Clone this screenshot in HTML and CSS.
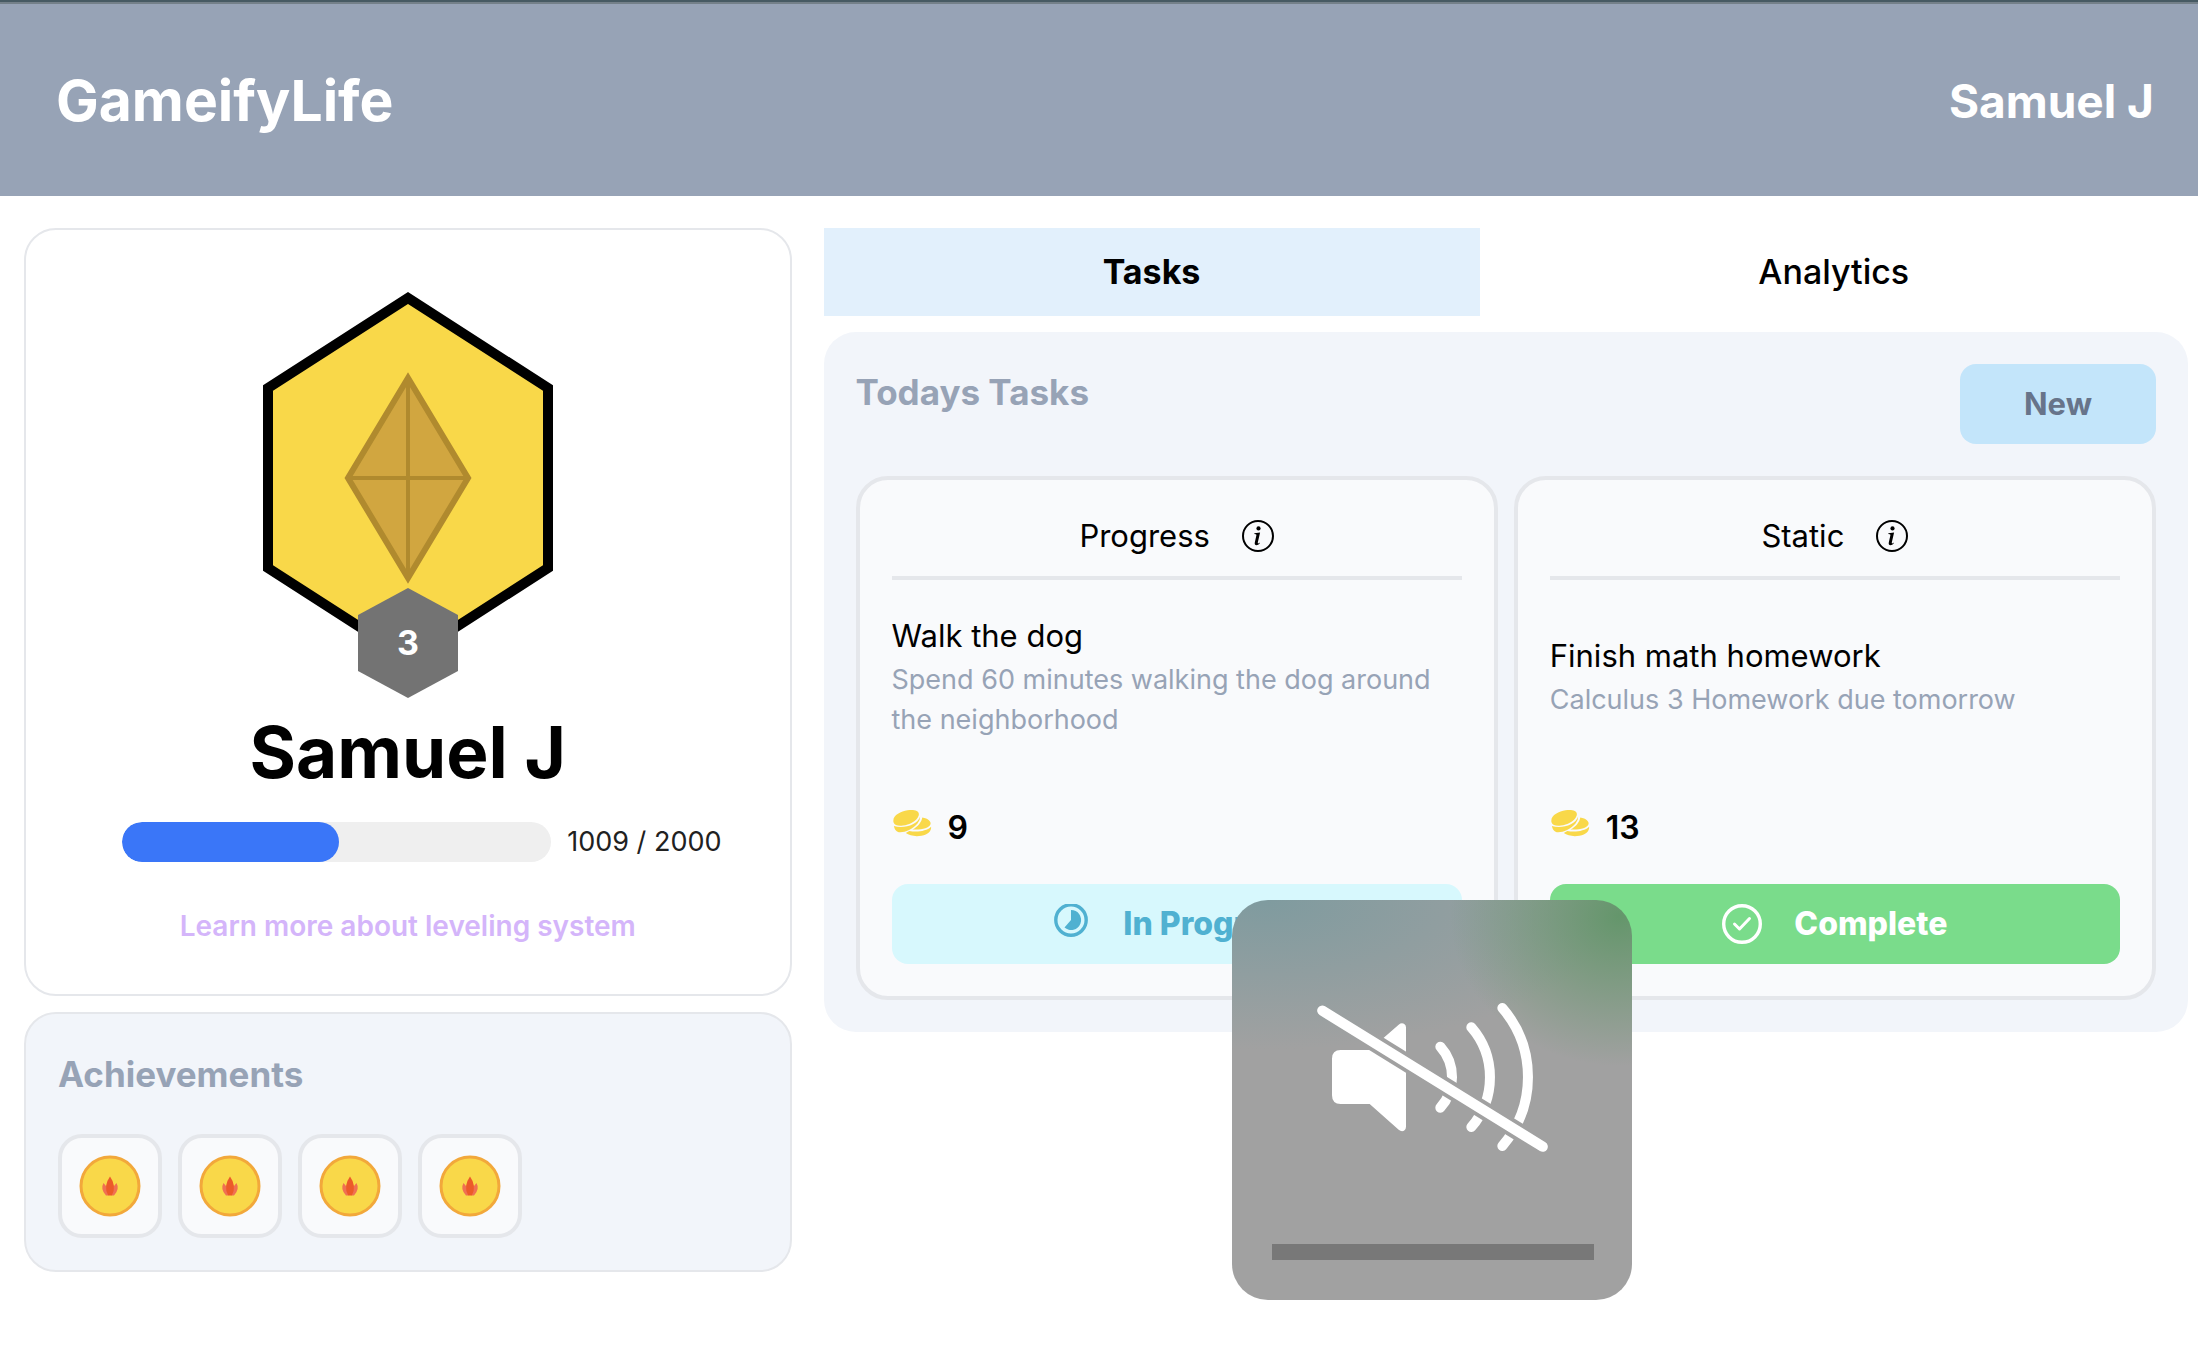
FILE: index.html
```html
<!DOCTYPE html>
<html lang="en">
<head>
<meta charset="utf-8">
<meta name="viewport" content="width=device-width, initial-scale=1">
<title>GameifyLife</title>
<link rel="stylesheet" href="styles.css">
</head>
<body>
<svg class="sprite" aria-hidden="true">
  <symbol id="info" viewBox="0 0 32 32">
    <circle cx="16" cy="16" r="15" fill="none" stroke="currentColor" stroke-width="2"/>
    <circle cx="16.5" cy="8.4" r="2.1" fill="currentColor"/>
    <path d="M12.4 13.2L18.1 12.5L15.800 22.600Q15.700 23.700 16.400 23.500Q17 23.300 17.700 22.600L17.500 23.800Q16.200 25.200 14.500 25.200Q12.300 25 12.800 22.400L14.400 15.200Q14.500 14.300 13.700 14.200L12.300 14.100Z" fill="currentColor"/>
  </symbol>
  <symbol id="coins" viewBox="0 0 40 40">
    <g fill="#f9d849">
      <path d="M1.6 18.5C-.4 12 8.500 7.200 15.500 6.300C22 5.300 28.500 6.500 26.500 12C24.500 17.500 17 20.800 11 21.600C6.500 22.200 2.500 21.500 1.600 18.500Z"/>
      <path d="M1.900 21.900C11 25.200 25.500 21 28.200 12.500Q28.300 16 25.500 19.500C20.500 25.500 13.500 28.300 8 28.200C4.500 28 2.800 26 1.900 21.900Z"/>
      <path d="M30.300 13.400C36 14.200 39.500 17.500 38.500 20.300C37 24 30 26 20.500 25.500C26 22.500 29.500 18 30.300 13.400Z"/>
      <path d="M17.300 27C25 28.400 34.500 27.300 39.100 22.800C39.500 27 36 30.600 29.500 31.800C23 32.700 17.500 31.800 13.800 29.100Z"/>
    </g>
  </symbol>
  <symbol id="flame-coin" viewBox="0 0 62 62">
    <circle cx="31" cy="31" r="29" fill="#f9d849" stroke="#f2a83b" stroke-width="3"/>
    <path d="M24.500 28Q29.500 33 29.500 40.500H27Q21 34 24.500 28ZM37.500 28Q32.500 33 32.500 40.500H35Q41 34 37.500 28Z" fill="#f07053"/>
    <path d="M31 21.500Q38 31 32.800 40.500H29.200Q24 31 31 21.500Z" fill="#ec5a29"/>
  </symbol>
</svg>

<header class="topbar">
  <h1 class="brand">GameifyLife</h1>
  <span class="user">Samuel J</span>
</header>

<main class="layout">
  <div class="side">
    <section class="profile">
      <svg class="badge" viewBox="0 0 292 410" role="img" aria-label="Level 3">
        <path d="M146 8L286 98V278L146 368L6 278V98Z" fill="#f9d849" stroke="#000" stroke-width="10"/>
        <path d="M146 88L206 188L146 288L86 188Z" fill="#d1a640" stroke="#b08a2e" stroke-width="6"/>
        <path d="M146 88V288M86 188H206" stroke="#b08a2e" stroke-width="4"/>
        <path d="M146 298L196 325V381L146 408L96 381V325Z" fill="#737373"/>
        <text class="badge-level" x="146" y="365" text-anchor="middle">3</text>
      </svg>
      <h2 class="profile-name">Samuel J</h2>
      <div class="xp">
        <progress class="xp-bar" id="xp" value="1009" max="2000"></progress>
        <label class="xp-label" for="xp">1009 / 2000</label>
      </div>
      <a class="learn" href="#">Learn more about leveling system</a>
    </section>

    <section class="achievements">
      <h2 class="section-title">Achievements</h2>
      <ul class="tiles">
        <li class="tile"><svg class="tile-icon"><use href="#flame-coin"/></svg></li>
        <li class="tile"><svg class="tile-icon"><use href="#flame-coin"/></svg></li>
        <li class="tile"><svg class="tile-icon"><use href="#flame-coin"/></svg></li>
        <li class="tile"><svg class="tile-icon"><use href="#flame-coin"/></svg></li>
      </ul>
    </section>
  </div>

  <div class="content">
    <nav class="tabs">
      <button class="tab tab-active" type="button">Tasks</button>
      <button class="tab" type="button">Analytics</button>
    </nav>

    <section class="panel">
      <div class="panel-head">
        <h2 class="section-title">Todays Tasks</h2>
        <button class="new" type="button">New</button>
      </div>
      <div class="cards">
        <article class="card">
          <div class="card-head"><span>Progress</span><svg class="info"><use href="#info"/></svg></div>
          <div class="card-body">
            <h3 class="task-title">Walk the dog</h3>
            <p class="task-text">Spend 60 minutes walking the dog around the neighborhood</p>
          </div>
          <div class="reward"><svg class="icon"><use href="#coins"/></svg><span>9</span></div>
          <button class="action action-progress" type="button">
            <svg class="icon" viewBox="0 0 40 40"><circle cx="20" cy="16" r="15.200" fill="none" stroke="currentColor" stroke-width="3.400"/><path d="M20 16V6A10 10 0 1 1 13.500 23.500Z" fill="currentColor"/></svg>
            <span>In Progress</span>
          </button>
        </article>
        <article class="card">
          <div class="card-head"><span>Static</span><svg class="info"><use href="#info"/></svg></div>
          <div class="card-body">
            <h3 class="task-title">Finish math homework</h3>
            <p class="task-text">Calculus 3 Homework due tomorrow</p>
          </div>
          <div class="reward"><svg class="icon"><use href="#coins"/></svg><span>13</span></div>
          <button class="action action-complete" type="button">
            <svg class="icon" viewBox="0 0 40 40" fill="none" stroke="currentColor" stroke-width="3.400" stroke-linecap="round" stroke-linejoin="round"><circle cx="20" cy="20" r="18.300"/><path d="M12.500 20L17.500 25L27.500 14.500" stroke-width="3"/></svg>
            <span>Complete</span>
          </button>
        </article>
      </div>
    </section>
  </div>
</main>

<div class="volume" role="status" aria-label="Muted">
  <svg class="volume-art" viewBox="66 60 1200 1200">
    <mask id="cut" maskUnits="userSpaceOnUse" x="66" y="60" width="1200" height="1200">
      <rect x="66" y="60" width="1200" height="1200" fill="#fff"/>
      <path d="M270 350L1064 841" stroke="#000" stroke-width="54"/>
    </mask>
    <g mask="url(#cut)">
      <path d="M392 510H479L566 434Q574 427 582 431Q588 434 588 442V740Q588 749 582 752Q574 756 566 749L479 672H392Q366 672 366 646V536Q366 510 392 510Z" fill="#fff"/>
      <path d="M691 500A137 137 0 0 1 691 683M784 442A228 228 0 0 1 784 741M877 384A317 317 0 0 1 877 798" fill="none" stroke="#fff" stroke-width="30" stroke-linecap="round"/>
    </g>
    <path d="M337 392L998 800" stroke="#fff" stroke-width="31" stroke-linecap="round"/>
    <rect x="186" y="1092" width="966" height="48" fill="#787878"/>
  </svg>
</div>
</body>
</html>
```
FILE: styles.css
```css
* {
  box-sizing: border-box;
}

body {
  margin: 0;
  background: #fff;
  color: #000;
  font-family: Inter, "Liberation Sans", sans-serif;
  font-size: 31px;
  line-height: 48px;
}

h1, h2, h3, p, ul {
  margin: 0;
  padding: 0;
}

button {
  border: 0;
  padding: 0;
  background: none;
  color: inherit;
  font: inherit;
  cursor: pointer;
}

.sprite {
  display: none;
}

.topbar {
  display: flex;
  align-items: center;
  justify-content: space-between;
  height: 196px;
  padding: 6px 44px 0 56px;
  background: linear-gradient(#475a63 2px, #748089 2px, #748089 4px, #97a3b6 4px);
  color: #fff;
  font-weight: 700;
}

.brand {
  font-size: 57px;
  line-height: 72px;
}

.user {
  font-size: 46px;
}

.layout {
  display: grid;
  grid-template-columns: 9fr 16fr;
  align-items: start;
  gap: 32px;
  padding: 32px 10px 88px 24px;
}

.side, .content {
  display: flex;
  flex-direction: column;
  gap: 16px;
}

.profile {
  display: flex;
  flex-direction: column;
  align-items: center;
  padding: 60px 0 48px;
  border: 2px solid #e5e7eb;
  border-radius: 32px;
}

.badge {
  width: 292px;
  height: 410px;
}

.badge-level {
  fill: #fff;
  font-size: 34px;
  font-weight: 700;
}

.profile-name {
  margin-top: 12px;
  font-size: 71px;
  line-height: 80px;
}

.xp {
  display: flex;
  align-items: center;
  align-self: stretch;
  gap: 16px;
  margin-top: 30px;
  padding: 0 68px 0 96px;
}

.xp-bar {
  flex: 1;
  min-width: 0;
  height: 40px;
  border: 0;
  border-radius: 20px;
  overflow: hidden;
  background: #efefef;
  appearance: none;
}

.xp-bar::-webkit-progress-bar {
  background: #efefef;
}

.xp-bar::-webkit-progress-value {
  border-radius: 20px;
  background: #3a76f8;
}

.xp-label {
  color: #212121;
  font-size: 27px;
  line-height: 40px;
}

.learn {
  margin-top: 44px;
  color: #d4b5fa;
  font-size: 28px;
  font-weight: 600;
  line-height: 40px;
  text-decoration: none;
}

.achievements {
  padding: 32px;
  border: 2px solid #e5e7eb;
  border-radius: 32px;
  background: #f2f5fa;
}

.section-title {
  color: #97a3b6;
  font-size: 35px;
  font-weight: 700;
  line-height: 56px;
}

.tiles {
  display: flex;
  gap: 16px;
  margin-top: 32px;
  list-style: none;
}

.tile {
  display: grid;
  place-items: center;
  width: 104px;
  height: 104px;
  border: 4px solid #e5e7eb;
  border-radius: 24px;
  background: #f9fafc;
}

.tile-icon {
  width: 62px;
  height: 62px;
}

.tabs {
  display: grid;
  grid-template-columns: 25fr 27fr;
}

.tab {
  height: 88px;
  font-size: 34px;
  font-weight: 500;
}

.tab-active {
  background: #e2f0fc;
  font-weight: 700;
}

.panel {
  padding: 32px;
  border-radius: 32px;
  background: #f2f5fa;
}

.panel-head {
  display: flex;
  align-items: flex-start;
  justify-content: space-between;
}

.new {
  padding: 16px 64px;
  border-radius: 16px;
  background: #c3e5fa;
  color: #67748a;
  font-weight: 700;
}

.cards {
  display: grid;
  grid-template-columns: 1fr 1fr;
  gap: 16px;
  margin-top: 32px;
}

.card {
  display: flex;
  flex-direction: column;
  padding: 32px;
  border: 4px solid #e5e7eb;
  border-radius: 32px;
  background: #f9fafc;
}

.card-head {
  display: flex;
  align-items: center;
  justify-content: center;
  gap: 32px;
  padding-bottom: 16px;
  border-bottom: 4px solid #e5e7eb;
}

.info {
  width: 32px;
  height: 32px;
}

.card-body {
  display: flex;
  flex: 1;
  flex-direction: column;
  justify-content: center;
  margin: 32px 0 64px;
}

.task-title {
  font-size: 31px;
  font-weight: 400;
}

.task-text {
  color: #97a3b6;
  font-size: 27px;
  line-height: 40px;
}

.reward {
  display: flex;
  gap: 16px;
  font-size: 32px;
  font-weight: 600;
}

.icon {
  flex: none;
  width: 40px;
  height: 40px;
}

.action {
  display: flex;
  align-items: center;
  justify-content: center;
  gap: 32px;
  height: 80px;
  margin-top: 32px;
  border-radius: 16px;
  font-size: 32px;
  font-weight: 800;
}

.action-progress {
  background: #d7f8fd;
  color: #50b1d1;
}

.action-complete {
  background: #7adc8b;
  color: #fff;
}

.volume {
  position: absolute;
  top: 900px;
  right: 566px;
  width: 400px;
  height: 400px;
  border-radius: 36px;
  background:
    radial-gradient(ellipse 170px 150px at 97% 4%, #64966b, #64966b99 40%, #64966b00),
    radial-gradient(ellipse 360px 150px at 8% 0, #7f9b9f, #7f9b9f00),
    #a1a1a1;
}

.volume-art {
  display: block;
  width: 400px;
  height: 400px;
}
```
